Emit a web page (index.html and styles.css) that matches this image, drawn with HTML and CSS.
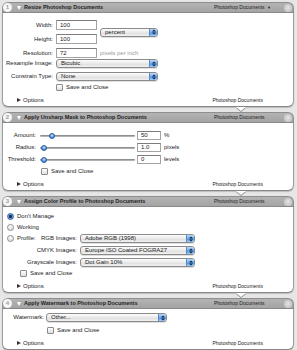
FILE: index.html
```html
<!DOCTYPE html>
<html lang="en">
<head>
<meta charset="utf-8" />
<meta name="viewport" content="width=device-width, initial-scale=1" />
<title>Workflow</title>
<link rel="stylesheet" href="styles.css">
</head>
<body>

<div class="flow">

  <section class="action">
    <div class="head">
      <span class="num">1</span><span class="disc"></span>
      <span class="title">Resize Photoshop Documents</span>
      <span class="src">Photoshop Documents <span class="caret">&#9660;</span></span>
      <span class="close">&times;</span>
    </div>
    <div class="body resize">
      <div class="wh">
        <span class="lab">Width:</span><span class="field">100</span>
        <span class="lab">Height:</span><span class="field">100</span>
        <span class="pop pct"><span class="pop-text">percent</span><span class="pop-btn"><svg width="4" height="6" viewBox="0 0 4 6"><path d="M0 2.4 2 0.4 4 2.4Z M0 3.6 2 5.6 4 3.6Z" fill="#14243c"/></svg></span></span>
      </div>
      <div class="row res">
        <span class="lab">Resolution:</span><span class="field">72</span><span class="unit dim">pixels per inch</span>
      </div>
      <div class="row sel1">
        <span class="lab">Resample Image:</span>
        <span class="pop wide"><span class="pop-text">Bicubic</span><span class="pop-btn"><svg width="4" height="6" viewBox="0 0 4 6"><path d="M0 2.4 2 0.4 4 2.4Z M0 3.6 2 5.6 4 3.6Z" fill="#14243c"/></svg></span></span>
      </div>
      <div class="row sel2">
        <span class="lab">Constrain Type:</span>
        <span class="pop wide"><span class="pop-text">None</span><span class="pop-btn"><svg width="4" height="6" viewBox="0 0 4 6"><path d="M0 2.4 2 0.4 4 2.4Z M0 3.6 2 5.6 4 3.6Z" fill="#14243c"/></svg></span></span>
      </div>
      <div class="row check"><span class="box"></span><span class="txt">Save and Close</span></div>
      <div class="foot"><span class="opts"><span class="ftri"></span>Options</span><span class="out">Photoshop Documents</span></div>
    </div>
  </section>

  <section class="action">
    <div class="head">
      <span class="num">2</span><span class="disc"></span>
      <span class="title">Apply Unsharp Mask to Photoshop Documents</span>
      <span class="src">Photoshop Documents</span>
      <span class="close">&times;</span>
    </div>
    <div class="body sharpen">
      <div class="row">
        <span class="lab">Amount:</span>
        <span class="slider"><span class="thumb" style="left:9px"></span></span>
        <span class="field">50</span><span class="unit">%</span>
      </div>
      <div class="row">
        <span class="lab">Radius:</span>
        <span class="slider"><span class="thumb" style="left:1px"></span></span>
        <span class="field">1.0</span><span class="unit">pixels</span>
      </div>
      <div class="row">
        <span class="lab">Threshold:</span>
        <span class="slider"><span class="thumb" style="left:1px"></span></span>
        <span class="field">0</span><span class="unit">levels</span>
      </div>
      <div class="row check"><span class="box"></span><span class="txt">Save and Close</span></div>
      <div class="foot"><span class="opts"><span class="ftri"></span>Options</span><span class="out">Photoshop Documents</span></div>
    </div>
  </section>

  <section class="action">
    <div class="head">
      <span class="num">3</span><span class="disc"></span>
      <span class="title">Assign Color Profile to Photoshop Documents</span>
      <span class="src">Photoshop Documents</span>
      <span class="close">&times;</span>
    </div>
    <div class="body profile">
      <div class="row"><span class="radio on"></span><span class="txt">Don't Manage</span></div>
      <div class="row"><span class="radio"></span><span class="txt">Working</span></div>
      <div class="row">
        <span class="lab"><span class="radio"></span><span class="txt">Profile:</span><span class="sub">RGB Images:</span></span>
        <span class="pop"><span class="pop-text">Adobe RGB (1998)</span><span class="pop-btn"><svg width="4" height="6" viewBox="0 0 4 6"><path d="M0 2.4 2 0.4 4 2.4Z M0 3.6 2 5.6 4 3.6Z" fill="#14243c"/></svg></span></span>
      </div>
      <div class="row">
        <span class="lab">CMYK Images:</span>
        <span class="pop"><span class="pop-text">Europe ISO Coated FOGRA27</span><span class="pop-btn"><svg width="4" height="6" viewBox="0 0 4 6"><path d="M0 2.4 2 0.4 4 2.4Z M0 3.6 2 5.6 4 3.6Z" fill="#14243c"/></svg></span></span>
      </div>
      <div class="row">
        <span class="lab">Grayscale Images:</span>
        <span class="pop"><span class="pop-text">Dot Gain 10%</span><span class="pop-btn"><svg width="4" height="6" viewBox="0 0 4 6"><path d="M0 2.4 2 0.4 4 2.4Z M0 3.6 2 5.6 4 3.6Z" fill="#14243c"/></svg></span></span>
      </div>
      <div class="row check"><span class="box"></span><span class="txt">Save and Close</span></div>
      <div class="foot"><span class="opts"><span class="ftri"></span>Options</span><span class="out">Photoshop Documents</span></div>
    </div>
  </section>

  <section class="action">
    <div class="head">
      <span class="num">4</span><span class="disc"></span>
      <span class="title">Apply Watermark to Photoshop Documents</span>
      <span class="src">Photoshop Documents</span>
      <span class="close">&times;</span>
    </div>
    <div class="body watermark">
      <div class="row">
        <span class="lab">Watermark:</span>
        <span class="pop"><span class="pop-text">Other...</span><span class="pop-btn"><svg width="4" height="6" viewBox="0 0 4 6"><path d="M0 2.4 2 0.4 4 2.4Z M0 3.6 2 5.6 4 3.6Z" fill="#14243c"/></svg></span></span>
      </div>
      <div class="row check"><span class="box"></span><span class="txt">Save and Close</span></div>
      <div class="foot"><span class="opts"><span class="ftri"></span>Options</span><span class="out">Photoshop Documents</span></div>
    </div>
  </section>

</div>

</body>
</html>
```

FILE: styles.css
```css
:root {
  --bg: #e6e6e6;
  --head: #a9a9a9;
  --edge: #959595;
  --text: #1c1c1c;
  --dim: #9a9a9a;
}
*{box-sizing:border-box;margin:0;padding:0;}
body{
  background:var(--bg);
  color:var(--text);
  font-family:"Liberation Sans",Arial,sans-serif;
  font-size:6px;
  line-height:9px;
  width:297px;
  height:350px;
  overflow:hidden;
  padding:2px 3px 0 2px;
}
.flow{width:292px;}
.action{position:relative;margin-bottom:5px;}
.action:not(:last-child)::after{
  content:"";
  position:absolute;
  left:234px;
  bottom:-4px;
  border-left:5px solid transparent;
  border-right:5px solid transparent;
  border-top:4px solid #fff;
  filter:drop-shadow(0 1px 0 #8c8c8c);
}

/* header bar */
.head{
  height:11px;
  display:flex;
  align-items:center;
  background:linear-gradient(#b3b3b3,#a4a4a4);
  border:1px solid #8f8f8f;
  border-bottom:1px solid #888;
  border-radius:6px 6px 0 0;
  padding:0 1px 0 0;
}
.num{
  width:9px;height:9px;
  border-radius:50%;
  background:#f6f6f6;
  color:#a0a0a0;
  font-size:6px;
  font-weight:bold;
  display:flex;align-items:center;justify-content:center;
}
.disc{
  margin-left:5px;
  width:0;height:0;
  border-left:2.5px solid transparent;
  border-right:2.5px solid transparent;
  border-top:4px solid #fff;
}
.title{margin-left:3px;font-weight:bold;font-size:5.5px;color:#222;}
.src{margin-left:auto;width:70px;font-size:5px;color:#222;}
.caret{font-size:4px;margin-left:1px;}
.close{
  width:8px;height:8px;
  border-radius:50%;
  background:#cfcfcf;
  color:#f2f2f2;
  font-size:7px;
  line-height:8px;
  text-align:center;
}

/* body */
.body{
  background:#fff;
  border:1px solid #9c9c9c;
  border-top:none;
  border-bottom-color:#878787;
  border-radius:0 0 6px 6px;
  box-shadow:0 1px 1px rgba(0,0,0,.18);
}
.row{display:flex;align-items:center;height:9px;}
.lab{text-align:right;flex:none;}
.field{
  flex:none;
  height:9px;
  border:1px solid #a3a3a3;
  border-top-color:#7c7c7c;
  background:#fff;
  padding-left:3px;
  line-height:7px;
}
.unit{margin-left:3px;}
.dim{color:var(--dim);}

.pop{
  flex:none;
  height:9px;
  display:flex;
  border:1px solid #8a8a8a;
  border-radius:3px;
  background:linear-gradient(#fdfdfd,#e9e9e9 50%,#dcdcdc 51%,#f2f2f2);
  overflow:hidden;
  box-shadow:0 1px 0 rgba(0,0,0,.12);
}
.pop-text{flex:1;padding-left:4px;line-height:7px;}
.pop-btn{
  width:8px;
  display:flex;align-items:center;justify-content:center;
  background:linear-gradient(#bcdcfb,#6aa9ee 50%,#3f8ce6 51%,#9fd0fb);
  border-left:1px solid #5c89c0;
}

.check .box{
  width:7px;height:7px;
  border:1px solid #8b8b8b;
  border-radius:1px;
  background:linear-gradient(#fff,#dedede);
}
.txt{margin-left:3px;}

.radio{
  display:inline-block;
  width:7px;height:7px;
  border-radius:50%;
  border:1px solid #8b8b8b;
  background:linear-gradient(#fff,#dedede);
  flex:none;
}
.radio.on{
  border-color:#3b63a0;
  background:radial-gradient(circle,#1d2c44 0 1.3px,#6fa8ee 1.8px,#3d7fd8);
}

.foot{
  display:flex;
  justify-content:space-between;
  height:14px;
  padding:3px 30px 1px 14px;
  line-height:10px;
}
.opts{display:flex;align-items:center;}
.ftri{
  width:0;height:0;
  margin-right:2px;
  border-top:2.5px solid transparent;
  border-bottom:2.5px solid transparent;
  border-left:4px solid #333;
}
.out{font-size:5px;}

/* 1: resize */
.resize{padding-top:7px;}
.wh{
  display:grid;
  grid-template-columns:50px 41px 58px;
  grid-template-rows:10px 10px;
  column-gap:3px;
  row-gap:4px;
  align-items:center;
}
.wh .field{height:10px;line-height:8px;}
.pct{grid-column:3;grid-row:1 / 3;align-self:center;}
.resize .lab{width:50px;}
.resize .field{width:41px;margin-left:3px;}
.wh .field{margin-left:0;}
.res{height:10px;margin-top:4px;}
.res .field{height:10px;line-height:8px;}
.sel1{margin-top:1px;}
.sel2{margin-top:4px;}
.resize .wide{width:102px;margin-left:3px;}
.resize .check{margin-top:2px;padding-left:53px;}

/* 2: unsharp */
.sharpen{padding-top:8px;}
.sharpen .row + .row{margin-top:3px;}
.sharpen .lab{width:33px;}
.slider{
  position:relative;
  flex:none;
  width:95px;height:9px;
  margin-left:4px;
}
.slider::before{
  content:"";
  position:absolute;
  left:0;right:0;top:4px;
  height:2px;
  border-radius:1px;
  background:linear-gradient(#7d7d7d,#c4c4c4);
}
.thumb{
  position:absolute;
  top:1.5px;
  width:6px;height:6px;
  border-radius:50%;
  background:radial-gradient(circle at 50% 35%,#d4ebff,#4a93ea 60%,#2f6fc4);
  border:0.5px solid #2c5a98;
}
.sharpen .field{width:24px;margin-left:2px;}
.sharpen .check{margin-top:4px;padding-left:38px;}

/* 3: profile */
.profile{padding-top:5px;}
.profile .row{padding-left:4px;}
.profile .row + .row{margin-top:2px;}
.profile .row:nth-child(n+4){margin-top:3px;}
.profile .lab{width:70px;display:flex;align-items:center;justify-content:flex-end;}
.profile .lab .txt{margin-right:auto;}
.profile .pop{width:115px;margin-left:3px;}
.profile .check{padding-left:17px;}
.profile .check.row{margin-top:2px;}

/* 4: watermark */
.watermark{padding-top:4px;}
.watermark .lab{width:41px;}
.watermark .pop{width:121px;margin-left:2px;}
.watermark .check{margin-top:4px;padding-left:44px;}
```
